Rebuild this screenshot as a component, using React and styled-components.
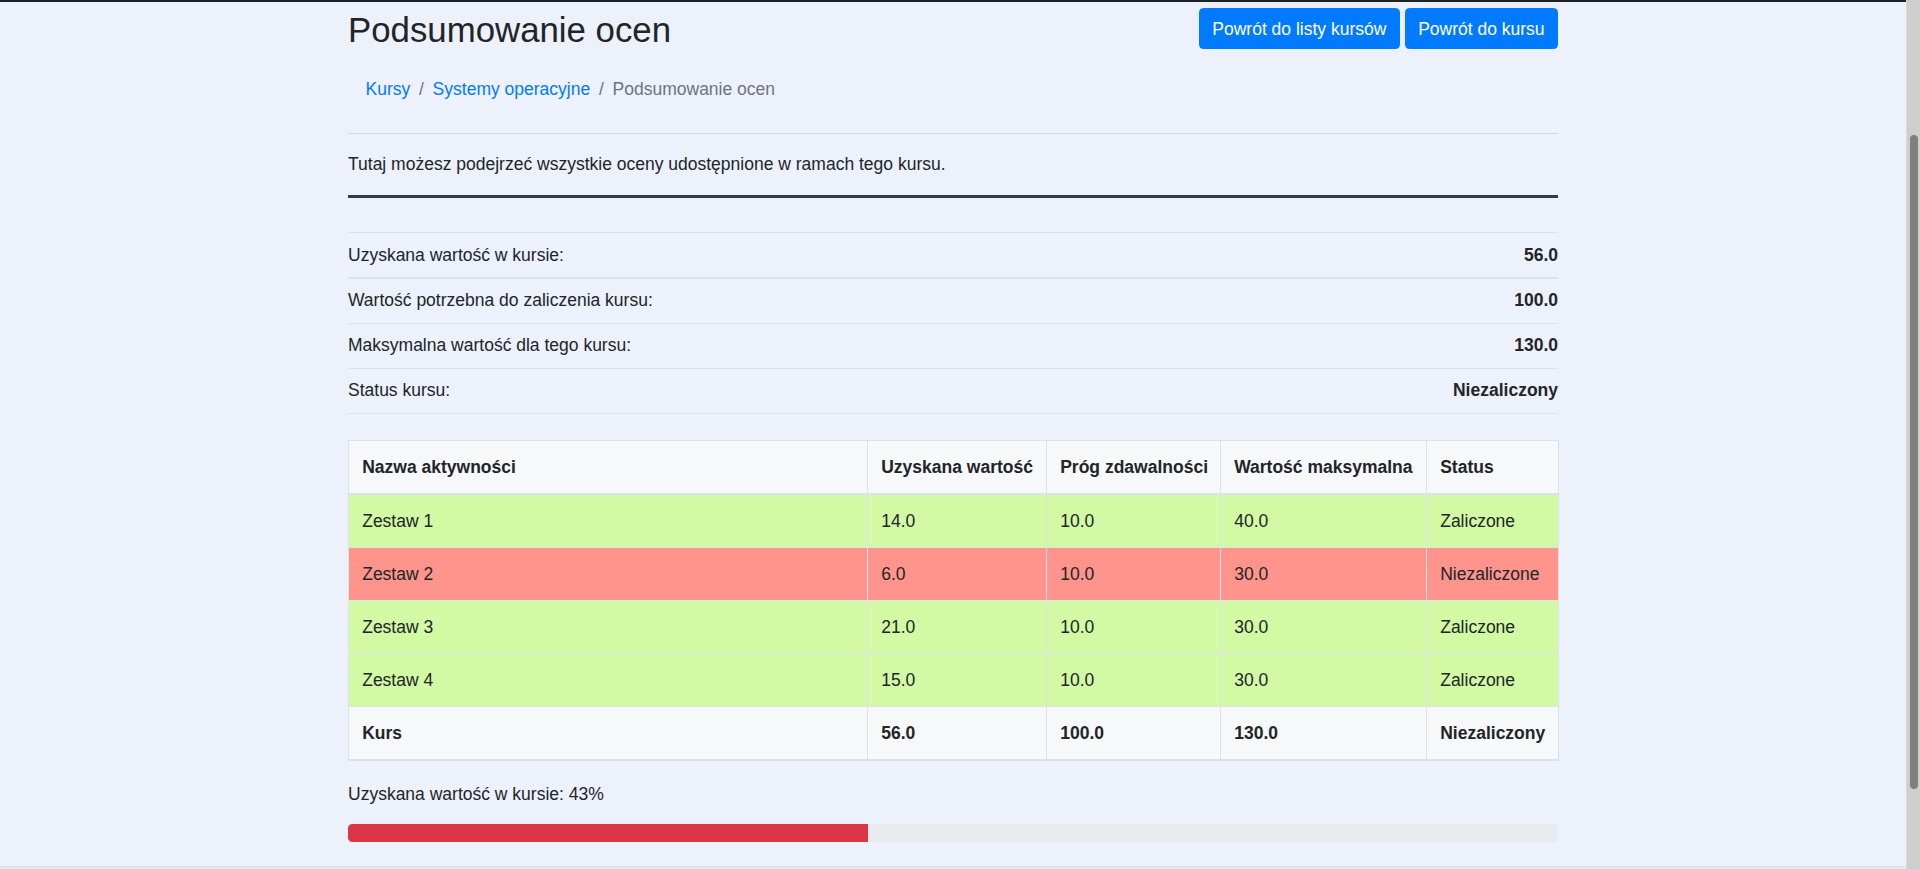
import React, { useLayoutEffect } from "react"
import styled, { createGlobalStyle } from "styled-components"

const GlobalStyle = createGlobalStyle`
  html {
    font-size: 17.5px;
  }

  body {
    margin: 0;
    padding-right: 14px;
    font-family: "Liberation Sans", Arial, sans-serif;
    font-size: 1rem;
    line-height: 1.5;
    color: #212529;
    background-color: #edf1fb;
  }
`

// the browser scrollbar, as it shows in the screenshot
const ScrollTrack = styled.div`
  position: fixed;
  top: 0;
  right: 0;
  bottom: 0;
  width: 14px;
  display: flex;
  flex-direction: column;
  align-items: center;
  background-color: #cecece;
  border-left: 1px solid #d9d9d9;
  box-sizing: border-box;
`

const ScrollThumb = styled.div`
  margin-top: 135px;
  width: 8px;
  height: 654px;
  border-radius: 4px;
  background-color: #7f7f7f;
`

const Navbar = styled.nav`
  height: 182px;
  background-color: #1d2124;
`

const Main = styled.main`
  width: 1210px;
  margin: 0 auto;
  padding-top: 7px;
`

const Header = styled.div`
  display: flex;
  justify-content: space-between;
  align-items: flex-start;
  padding-bottom: 3px;
`

const Title = styled.h2`
  margin: 0 0 0.5rem;
  font-size: 34.8px;
  font-weight: 500;
  line-height: 1.2;
`

const Actions = styled.div`
  display: flex;
  gap: 5px;
  margin-top: -1px;
`

const Button = styled.a`
  display: inline-block;
  padding: 6.6px 12.4px;
  font-size: 1rem;
  line-height: 1.5;
  color: #fff;
  background-color: #007bff;
  border: 1px solid #007bff;
  border-radius: 0.25rem;
  text-decoration: none;
  cursor: pointer;
`

const Breadcrumb = styled.ol`
  display: flex;
  list-style: none;
  margin: 0 0 1rem;
  padding: 0.75rem 1rem;
`

const Crumb = styled.li`
  color: ${(p) => (p.$active ? "#6c757d" : "#007bff")};

  & + li::before {
    content: "/";
    padding: 0 0.5rem;
    color: #6c757d;
  }
`

const CrumbLink = styled.a`
  color: #007bff;
  text-decoration: none;
`

const Rule = styled.hr`
  margin: 1rem 0;
  border: 0;
  border-top: 1px solid rgba(0, 0, 0, 0.1);
`

const ThickRule = styled.hr`
  margin: 1rem 0 34.7px;
  border: 0;
  border-top: 3px solid #343a40;
`

const Lead = styled.p`
  margin: 0 0 1rem;
`

const Stats = styled.div`
  margin-bottom: 26.4px;
  border-bottom: 1px solid #dee2e6;
`

const StatRow = styled.div`
  display: flex;
  justify-content: space-between;
  padding: ${(p) => (p.$thick ? "7.9px" : "8.9px")} 0 8.9px;
  border-top: ${(p) => (p.$thick ? "2px" : "1px")} solid #dee2e6;
`

const StatValue = styled.span`
  font-weight: 700;
`

const Table = styled.table`
  width: 100%;
  table-layout: fixed;
  border-collapse: collapse;
  margin-bottom: 19.5px;
  border: 1px solid #dee2e6;
`

const Col = styled.col`
  width: ${(p) => p.$w}px;
`

const Th = styled.th`
  padding: 12.9px 13.2px;
  text-align: left;
  font-weight: 700;
  background-color: #f7f8fa;
  border: 1px solid #dee2e6;
  border-bottom-width: 2px;
  white-space: nowrap;
`

const Tr = styled.tr`
  background-color: ${(p) =>
    p.$status === "ok" ? "#d2f9a3" : p.$status === "fail" ? "#fe948b" : "#f7f8fa"};
  border-bottom: ${(p) => (p.$foot ? "2px solid #dee2e6" : "none")};
`

const Td = styled.td`
  padding: 12.9px 13.2px;
  border: 1px solid #dee2e6;
  font-weight: ${(p) => (p.$bold ? 700 : 400)};
  white-space: nowrap;
`

const ProgressLabel = styled.p`
  margin: 0 0 17.6px;
`

const Progress = styled.div`
  display: flex;
  height: 17.6px;
  margin-bottom: 24px;
  overflow: hidden;
  background-color: #e9ecef;
  border-radius: 0.25rem;
`

const ProgressBar = styled.div`
  background-color: #dc3545;
`

const Footer = styled.footer`
  height: 110px;
  background-color: #e6e9f0;
  border-top: 1px solid #dcdfe6;
  box-sizing: border-box;
`

const stats = [
  ["Uzyskana wartość w kursie:", "56.0"],
  ["Wartość potrzebna do zaliczenia kursu:", "100.0"],
  ["Maksymalna wartość dla tego kursu:", "130.0"],
  ["Status kursu:", "Niezaliczony"],
]

const activities = [
  { name: "Zestaw 1", got: "14.0", min: "10.0", max: "40.0", status: "Zaliczone", ok: true },
  { name: "Zestaw 2", got: "6.0", min: "10.0", max: "30.0", status: "Niezaliczone", ok: false },
  { name: "Zestaw 3", got: "21.0", min: "10.0", max: "30.0", status: "Zaliczone", ok: true },
  { name: "Zestaw 4", got: "15.0", min: "10.0", max: "30.0", status: "Zaliczone", ok: true },
]

const App = () => {
  useLayoutEffect(() => {
    window.scrollTo(0, 180)
  }, [])

  return (
    <>
      <GlobalStyle />
      <Navbar />
      <Main>
        <Header>
          <Title>Podsumowanie ocen</Title>
          <Actions>
            <Button>Powrót do listy kursów</Button>
            <Button>Powrót do kursu</Button>
          </Actions>
        </Header>

        <Breadcrumb>
          <Crumb><CrumbLink>Kursy</CrumbLink></Crumb>
          <Crumb><CrumbLink>Systemy operacyjne</CrumbLink></Crumb>
          <Crumb $active>Podsumowanie ocen</Crumb>
        </Breadcrumb>

        <Rule />
        <Lead>Tutaj możesz podejrzeć wszystkie oceny udostępnione w ramach tego kursu.</Lead>
        <ThickRule />

        <Stats>
          {stats.map(([label, value], i) => (
            <StatRow key={label} $thick={i === 1}>
              <span>{label}</span>
              <StatValue>{value}</StatValue>
            </StatRow>
          ))}
        </Stats>

        <Table>
          <colgroup>
            <Col $w={519} />
            <Col $w={179} />
            <Col $w={174} />
            <Col $w={206} />
            <Col $w={132} />
          </colgroup>
          <thead>
            <tr>
              <Th>Nazwa aktywności</Th>
              <Th>Uzyskana wartość</Th>
              <Th>Próg zdawalności</Th>
              <Th>Wartość maksymalna</Th>
              <Th>Status</Th>
            </tr>
          </thead>
          <tbody>
            {activities.map((a) => (
              <Tr key={a.name} $status={a.ok ? "ok" : "fail"}>
                <Td>{a.name}</Td>
                <Td>{a.got}</Td>
                <Td>{a.min}</Td>
                <Td>{a.max}</Td>
                <Td>{a.status}</Td>
              </Tr>
            ))}
          </tbody>
          <tfoot>
            <Tr $foot>
              <Td $bold>Kurs</Td>
              <Td $bold>56.0</Td>
              <Td $bold>100.0</Td>
              <Td $bold>130.0</Td>
              <Td $bold>Niezaliczony</Td>
            </Tr>
          </tfoot>
        </Table>

        <ProgressLabel>Uzyskana wartość w kursie: 43%</ProgressLabel>
        <Progress>
          <ProgressBar style={{ width: "43%" }} />
        </Progress>
      </Main>
      <Footer />
      <ScrollTrack>
        <ScrollThumb />
      </ScrollTrack>
    </>
  )
}

export default App
